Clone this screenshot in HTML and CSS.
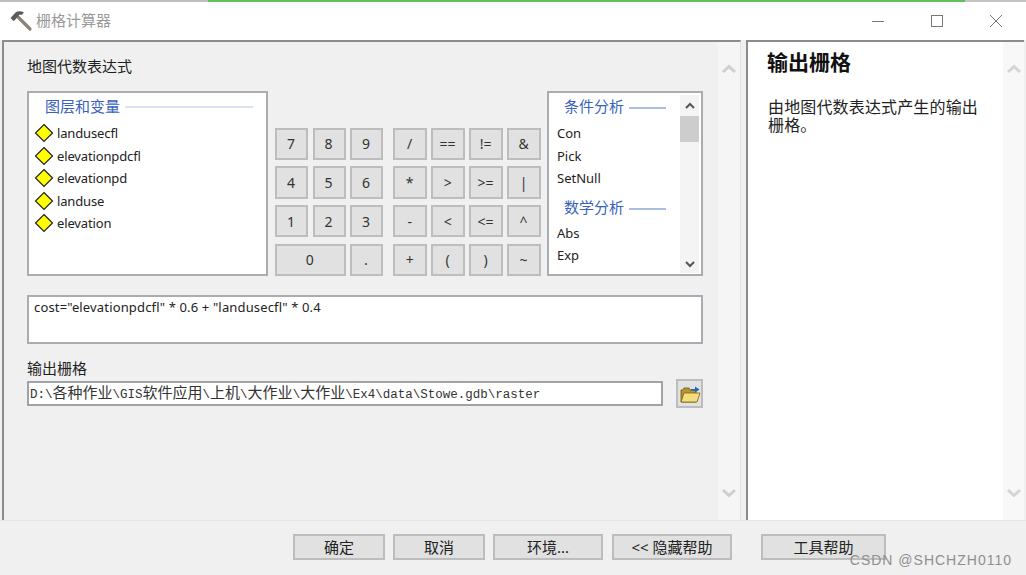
FILE: index.html
```html
<!DOCTYPE html>
<html lang="zh">
<head>
<meta charset="utf-8">
<title>栅格计算器</title>
<link rel="stylesheet" href="styles.css">
</head>
<body>
<div class="window">
  <div class="strip"><span class="strip-a"></span><span class="strip-b"></span><span class="strip-c"></span></div>
  <header class="titlebar">
    <svg class="hammer" width="24" height="24" viewBox="0 0 24 24"><path d="M8 7 L21 20" stroke="#8a8378" stroke-width="3.2" stroke-linecap="round"/><path d="M1.5 9 L7 3 Q11 1.5 15 3.5 L12.5 6 L10.5 5.5 L6 11 L4.5 12 Z" fill="#5b5b5b"/></svg>
    <span class="title">栅格计算器</span>
    <div class="controls">
      <svg width="14" height="14" viewBox="0 0 14 14"><path d="M1 7.5H13" stroke="#777" fill="none"/></svg>
      <svg width="14" height="14" viewBox="0 0 14 14"><rect x="1.5" y="1.5" width="11" height="11" stroke="#777" fill="none"/></svg>
      <svg width="14" height="14" viewBox="0 0 14 14"><path d="M1 1L13 13M13 1L1 13" stroke="#777" fill="none"/></svg>
    </div>
  </header>
  <main class="main">
    <section class="tool">
      <div class="tool-body">
        <div class="label first">地图代数表达式</div>
        <div class="calc">
          <div class="listbox layers">
            <div class="sect"><span>图层和变量</span><i class="rule pale"></i></div>
            <div class="layer"><svg class="dia" width="20" height="20" viewBox="0 0 20 20"><path d="M10 1.5L18.5 10L10 18.5L1.5 10Z" fill="#ffff00" stroke="#222" stroke-width="1.2"/></svg>landusecfl</div>
            <div class="layer"><svg class="dia" width="20" height="20" viewBox="0 0 20 20"><path d="M10 1.5L18.5 10L10 18.5L1.5 10Z" fill="#ffff00" stroke="#222" stroke-width="1.2"/></svg>elevationpdcfl</div>
            <div class="layer"><svg class="dia" width="20" height="20" viewBox="0 0 20 20"><path d="M10 1.5L18.5 10L10 18.5L1.5 10Z" fill="#ffff00" stroke="#222" stroke-width="1.2"/></svg>elevationpd</div>
            <div class="layer"><svg class="dia" width="20" height="20" viewBox="0 0 20 20"><path d="M10 1.5L18.5 10L10 18.5L1.5 10Z" fill="#ffff00" stroke="#222" stroke-width="1.2"/></svg>landuse</div>
            <div class="layer"><svg class="dia" width="20" height="20" viewBox="0 0 20 20"><path d="M10 1.5L18.5 10L10 18.5L1.5 10Z" fill="#ffff00" stroke="#222" stroke-width="1.2"/></svg>elevation</div>
          </div>
          <div class="keypad">
            <div class="keys digits">
              <button class="key">7</button><button class="key">8</button><button class="key">9</button>
              <button class="key">4</button><button class="key">5</button><button class="key">6</button>
              <button class="key">1</button><button class="key">2</button><button class="key">3</button>
              <button class="key wide">0</button><button class="key">.</button>
            </div>
            <div class="keys ops">
              <button class="key">/</button><button class="key">==</button><button class="key">!=</button><button class="key">&amp;</button>
              <button class="key">*</button><button class="key">&gt;</button><button class="key">&gt;=</button><button class="key">|</button>
              <button class="key">-</button><button class="key">&lt;</button><button class="key">&lt;=</button><button class="key">^</button>
              <button class="key">+</button><button class="key">(</button><button class="key">)</button><button class="key">~</button>
            </div>
          </div>
          <div class="listbox funcs">
            <div class="func-list">
              <div class="sect fsect"><span>条件分析</span><i class="rule blue"></i></div>
              <div class="func">Con</div>
              <div class="func">Pick</div>
              <div class="func">SetNull</div>
              <div class="sect fsect lower"><span>数学分析</span><i class="rule blue"></i></div>
              <div class="func">Abs</div>
              <div class="func">Exp</div>
            </div>
            <div class="mini-scroll">
              <svg class="mini-chev" width="12" height="8" viewBox="0 0 12 8"><path d="M2 6L6 2L10 6" stroke="#555" stroke-width="2" fill="none"/></svg>
              <div class="thumb"></div>
              <svg class="mini-chev end" width="12" height="8" viewBox="0 0 12 8"><path d="M2 2L6 6L10 2" stroke="#555" stroke-width="2" fill="none"/></svg>
            </div>
          </div>
        </div>
        <div class="expr">cost="elevationpdcfl" * 0.6 + "landusecfl" * 0.4</div>
        <div class="label second">输出栅格</div>
        <div class="output">
          <div class="path"><span class="lat">D:\</span>各种作业<span class="lat">\GIS</span>软件应用<span class="lat">\</span>上机<span class="lat">\</span>大作业<span class="lat">\</span>大作业<span class="lat">\Ex4\data\Stowe.gdb\raster</span></div>
          <button class="browse">
            <svg width="22" height="22" viewBox="0 0 22 22"><path d="M2 19V7H4L5 5H10L11 7H17V19Z" fill="#b8962e" stroke="#6b5314" stroke-width=".8"/><path d="M2 19L5 10H21L18 19Z" fill="#f5dc7c" stroke="#7a6018" stroke-width=".8"/><path d="M12 6H16V3.5L20.5 6.5L16 9.5V7.5H12Z" fill="#1f65b8"/></svg>
          </button>
        </div>
      </div>
      <div class="vscroll">
        <svg width="16" height="10" viewBox="0 0 16 10"><path d="M2 8L8 2.5L14 8" stroke="#cfcfcf" stroke-width="3" fill="none"/></svg>
        <svg width="16" height="10" viewBox="0 0 16 10"><path d="M2 2L8 7.5L14 2" stroke="#cfcfcf" stroke-width="3" fill="none"/></svg>
      </div>
    </section>
    <aside class="help">
      <div class="help-body">
        <h1 class="help-title">输出栅格</h1>
        <p class="help-text">由地图代数表达式产生的输出栅格。</p>
      </div>
      <div class="vscroll light">
        <svg width="16" height="10" viewBox="0 0 16 10"><path d="M2 8L8 2.5L14 8" stroke="#d4d4d4" stroke-width="3" fill="none"/></svg>
        <svg width="16" height="10" viewBox="0 0 16 10"><path d="M2 2L8 7.5L14 2" stroke="#d4d4d4" stroke-width="3" fill="none"/></svg>
      </div>
    </aside>
  </main>
  <footer class="footer">
    <button class="btn ok">确定</button>
    <button class="btn ok">取消</button>
    <button class="btn env">环境...</button>
    <button class="btn hide">&lt;&lt; 隐藏帮助</button>
    <button class="btn tool-help">工具帮助</button>
  </footer>
  <div class="watermark">CSDN @SHCHZH0110</div>
</div>
</body>
</html>
```
FILE: styles.css
```css
* { box-sizing: border-box; }
html, body { margin: 0; height: 100%; }
body {
  font-family: "Noto Sans", "Noto Sans CJK SC", sans-serif;
  font-size: 13px;
  color: #222;
  background: #f0f0f0;
  overflow: hidden;
}
button { font: inherit; color: inherit; padding: 0; }
.window { position: relative; display: flex; flex-direction: column; height: 575px; }

.strip { display: flex; height: 2px; flex: none; }
.strip-a { width: 208px; background: #bdbdbd; }
.strip-b { width: 757px; background: #62bd5a; }
.strip-c { flex: 1; background: #c4c4c4; }

.titlebar { display: flex; align-items: center; height: 38px; flex: none; background: #fff; padding-left: 9px; }
.hammer { margin-top: -1px; }
.title { margin-left: 3px; font-size: 15px; color: #9a9a9a; margin-top: -3px; }
.controls { display: flex; margin-left: auto; gap: 45px; padding-right: 23px; margin-top: -1px; }

.main { flex: 1; display: flex; min-height: 0; }
.tool {
  display: flex; width: 739px; margin-left: 2px;
  border-top: 2px solid #8c8c8c; border-left: 2px solid #8c8c8c; border-right: 1px solid #e2e2e2;
  background: #f0f0f0;
}
.tool-body { width: 714px; padding: 15px 0 0 23px; }
.vscroll {
  flex: 1; display: flex; flex-direction: column; align-items: center; justify-content: space-between;
  padding: 22px 0 22px; background: #f5f5f5;
}
.vscroll.light { background: #f8f8f8; }

.label { height: 20px; line-height: 18px; font-size: 15px; color: #1f1f1f; }
.label.second { margin-top: 15px; }

.calc { display: flex; margin-top: 14px; height: 185px; }
.listbox { background: #fff; border: 2px solid #a9adb2; }
.layers { width: 241px; padding: 2px 0 0 5px; }
.sect { display: flex; align-items: center; height: 20px; font-size: 15px; color: #3a62bd; padding-left: 11px; }
.rule { height: 2px; margin-left: 5px; margin-top: 4px; display: block; }
.rule.pale { width: 128px; background: #dbe2f2; }
.rule.blue { width: 37px; background: #a9bde2; margin-top: 6px; }
.layer { display: flex; align-items: center; height: 22.5px; color: #222; white-space: nowrap; letter-spacing: -.14px; }
.layers .sect { margin-bottom: 7px; }
.dia { margin-right: 3px; flex: none; }

.keypad { display: flex; align-self: flex-end; margin-left: 7px; width: 272px; gap: 10px; }
.keys { display: grid; grid-auto-rows: 32.3px; row-gap: 6.4px; }
.digits { grid-template-columns: repeat(3, 33px); column-gap: 4.5px; }
.ops { grid-template-columns: repeat(4, 34.3px); column-gap: 3.7px; }
.key {
  background: #e1e1e1; border: 2px solid #bdbdbd; color: #333; font-size: 14px;
  font-family: "Noto Sans", sans-serif; padding-right: 1px;
}
.wide { grid-column: span 2; }

.funcs { display: flex; width: 156px; margin-left: 0; padding: 2px 2px 1px 8px; }
.func-list { flex: 1; }
.fsect { padding-left: 7px; height: 20px; }
.fsect.lower { margin-top: 7px; }
.fsect.lower .rule { margin-top: 4px; }
.func { display: flex; align-items: center; height: 22.5px; }
.func-list .fsect + .func { margin-top: 7px; }
.func-list .fsect.lower + .func { margin-top: 5px; }
.mini-scroll { width: 19px; display: flex; flex-direction: column; align-items: center; background: #f4f4f4; padding-top: 7px; }
.mini-chev { flex: none; }
.mini-chev.end { margin-top: auto; margin-bottom: 5px; }
.thumb { width: 100%; height: 26px; margin-top: 6px; background: #cdcdcd; }

.expr {
  margin-top: 19px; width: 676px; height: 49px; padding: 1px 5px; background: #fff;
  border: 2px solid #a9adb2; line-height: 18px; color: #222; letter-spacing: .15px;
}
.output { display: flex; align-items: center; height: 29px; width: 676px; }
.path {
  width: 636px; height: 25px; background: #fff; border: 2px solid #a0a4a8; padding-left: 1px;
  font-size: 15px; line-height: 19px; white-space: nowrap; overflow: hidden; color: #333;
}
.lat { font-family: "Liberation Mono", monospace; font-size: 12.5px; }
.browse {
  display: flex; align-items: center; justify-content: center; width: 27px; height: 29px;
  margin-left: auto; background: #e1e1e1; border: 2px solid #bdbdbd;
}

.help { flex: 1; display: flex; margin-left: 5px; margin-right: 2px; background: #fff; border-top: 2px solid #8c8c8c; border-left: 2px solid #8c8c8c; }
.help-body { width: 255px; padding: 6px 0 0 19px; }
.help-title { margin: 0; font-size: 21px; line-height: 28px; font-weight: 700; color: #111; }
.help-text { margin: 22px 0 0 1px; width: 215px; font-size: 16px; letter-spacing: .15px; line-height: 18px; color: #222; }

.footer { display: flex; height: 55px; flex: none; padding: 13px 0 0 293px; border-top: 1px solid #e4e4e4; }
.btn { height: 26px; margin-top: 0; background: #e1e1e1; border: 2px solid #bdbdbd; font-size: 15px; line-height: 18px; color: #222; }
.ok { width: 92px; margin-right: 8px; }
.env { width: 110px; margin-right: 9px; }
.hide { width: 120px; margin-right: 29px; }
.tool-help { width: 125px; }

.watermark {
  position: absolute; right: 14px; top: 552px;
  font-family: "Liberation Sans", sans-serif; font-size: 14px; letter-spacing: 1px; color: #8f8f8f;
}
```
